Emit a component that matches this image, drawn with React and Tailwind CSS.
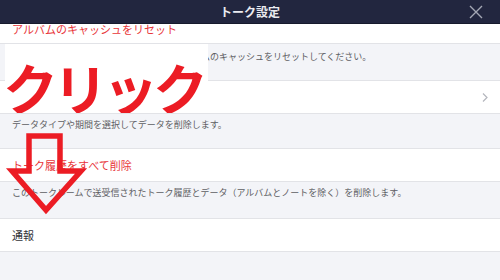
export default function App() {
  const jp = { fontFamily: '"Noto Sans CJK JP", "Noto Sans", sans-serif' };
  return (
    <div className="relative w-[500px] h-[280px] overflow-hidden bg-[#f3f4f8]" style={jp}>
      <div className="h-[24px] bg-[#22263f] border-b border-[#161a2c] flex items-center justify-center relative">
        <span className="text-[12px] leading-[12px] font-bold text-[#ebebf0]">トーク設定</span>
        <svg className="absolute left-[469px] top-[5px]" width="14" height="14" viewBox="0 0 14 14">
          <path d="M1 1 L13 13 M13 1 L1 13" stroke="#a4a7b4" strokeWidth="1.4" fill="none" />
        </svg>
      </div>
      <div className="h-[20px] bg-white border-b border-[#e2e3e7] px-[12px] overflow-hidden">
        <div className="text-[11px] leading-[11px] text-[#e8363a] mt-[0px]">アルバムのキャッシュをリセット</div>
      </div>
      <div className="h-[36px] px-[12px] pt-[8px]">
        <div className="text-[9px] leading-[10px] text-[#5e5e63] whitespace-nowrap">写真や動画が正しく表示されない場合、アルバムのキャッシュをリセットしてください。</div>
      </div>
      <div className="h-[34px] bg-white border-y border-[#e2e3e7] flex items-center justify-end pr-[12px]">
        <svg width="6" height="9" viewBox="0 0 6 9">
          <path d="M1 0.5 L5 4.5 L1 8.5" stroke="#b4b6bd" strokeWidth="1.2" fill="none" />
        </svg>
      </div>
      <div className="h-[34px] px-[12px] pt-[6px]">
        <div className="text-[9px] leading-[10px] text-[#5e5e63] whitespace-nowrap">データタイプや期間を選択してデータを削除します。</div>
      </div>
      <div className="h-[34px] bg-white border-y border-[#e2e3e7] flex items-center px-[12px]">
        <span className="text-[11px] leading-[11px] text-[#e8363a]">トーク履歴をすべて削除</span>
      </div>
      <div className="h-[36px] px-[12px] pt-[6px]">
        <div className="text-[9px] leading-[10px] text-[#5e5e63] whitespace-nowrap">このトークルームで送受信されたトーク履歴とデータ（アルバムとノートを除く）を削除します。</div>
      </div>
      <div className="h-[34px] bg-white border-y border-[#e2e3e7] flex items-center px-[12px]">
        <span className="text-[11px] leading-[11px] text-[#333338]">通報</span>
      </div>

      <div className="absolute left-[5px] top-[44px] w-[203px] h-[69px] bg-white overflow-hidden">
        <div className="absolute left-[-2px] top-[17px] text-[55px] leading-[50px] font-bold text-[#ec1c24] whitespace-nowrap tracking-[-5px]">クリック</div>
      </div>
      <svg className="absolute left-0 top-0" width="100" height="230" viewBox="0 0 100 230">
        <polygon points="29,136 60,136 60,171 81,171 46,210 12,171 29,171" stroke="#ec1c24" strokeWidth="5.5" fill="none" strokeLinejoin="miter" />
      </svg>
    </div>
  );
}
